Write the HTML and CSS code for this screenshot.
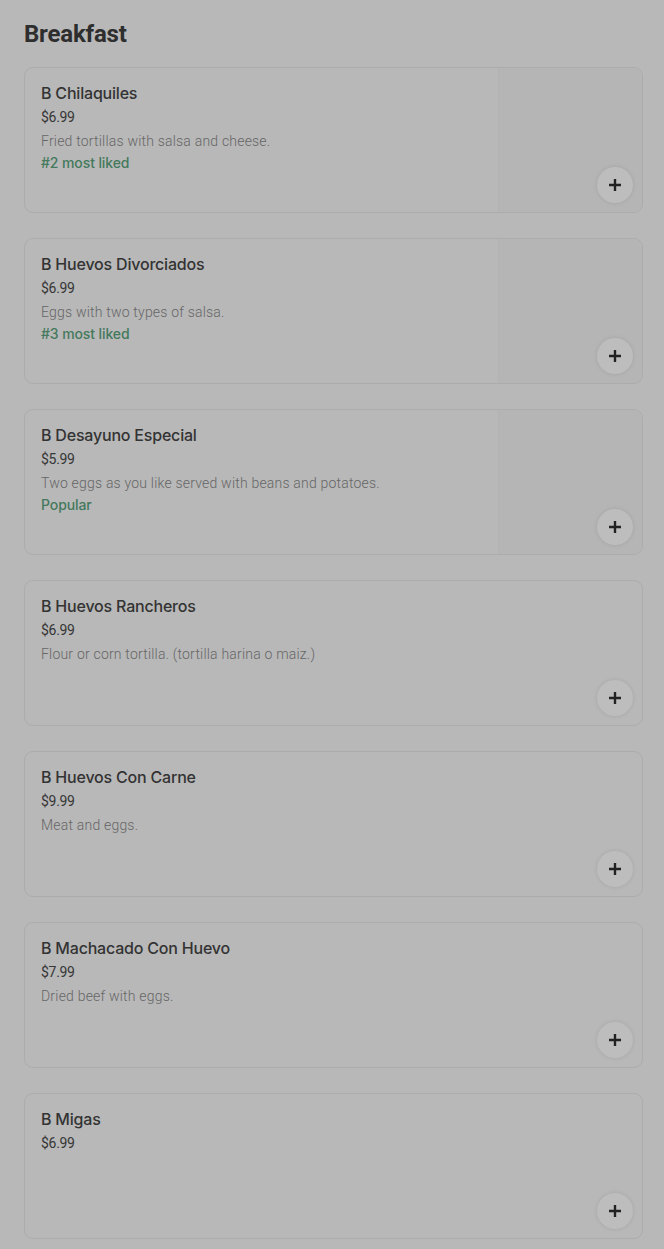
FILE: index.html
```html
<!DOCTYPE html>
<html lang="en">
<head>
  <meta charset="utf-8">
  <meta name="viewport" content="width=device-width, initial-scale=1">
  <title>Breakfast</title>
<link rel="stylesheet" href="styles.css">
</head>
<body>
  <main class="menu">
    <h2 class="section-title">Breakfast</h2>
    <ul class="items">
      <li class="item">
        <div class="info">
          <span class="name">B Chilaquiles</span>
          <span class="price">$6.99</span>
          <span class="desc">Fried tortillas with salsa and cheese.</span>
          <span class="tag">#2 most liked</span>
        </div>
        <div class="photo"></div>
        <button class="add" aria-label="Add"><svg viewBox="0 0 12 12" width="12" height="12"><path d="M6 0v12M0 6h12" stroke="#222" stroke-width="2.4"/></svg></button>
      </li>
      <li class="item">
        <div class="info">
          <span class="name">B Huevos Divorciados</span>
          <span class="price">$6.99</span>
          <span class="desc">Eggs with two types of salsa.</span>
          <span class="tag">#3 most liked</span>
        </div>
        <div class="photo"></div>
        <button class="add" aria-label="Add"><svg viewBox="0 0 12 12" width="12" height="12"><path d="M6 0v12M0 6h12" stroke="#222" stroke-width="2.4"/></svg></button>
      </li>
      <li class="item">
        <div class="info">
          <span class="name">B Desayuno Especial</span>
          <span class="price">$5.99</span>
          <span class="desc">Two eggs as you like served with beans and potatoes.</span>
          <span class="tag">Popular</span>
        </div>
        <div class="photo"></div>
        <button class="add" aria-label="Add"><svg viewBox="0 0 12 12" width="12" height="12"><path d="M6 0v12M0 6h12" stroke="#222" stroke-width="2.4"/></svg></button>
      </li>
      <li class="item">
        <div class="info">
          <span class="name">B Huevos Rancheros</span>
          <span class="price">$6.99</span>
          <span class="desc">Flour or corn tortilla. (tortilla harina o maiz.)</span>
        </div>
        <button class="add" aria-label="Add"><svg viewBox="0 0 12 12" width="12" height="12"><path d="M6 0v12M0 6h12" stroke="#222" stroke-width="2.4"/></svg></button>
      </li>
      <li class="item">
        <div class="info">
          <span class="name">B Huevos Con Carne</span>
          <span class="price">$9.99</span>
          <span class="desc">Meat and eggs.</span>
        </div>
        <button class="add" aria-label="Add"><svg viewBox="0 0 12 12" width="12" height="12"><path d="M6 0v12M0 6h12" stroke="#222" stroke-width="2.4"/></svg></button>
      </li>
      <li class="item">
        <div class="info">
          <span class="name">B Machacado Con Huevo</span>
          <span class="price">$7.99</span>
          <span class="desc">Dried beef with eggs.</span>
        </div>
        <button class="add" aria-label="Add"><svg viewBox="0 0 12 12" width="12" height="12"><path d="M6 0v12M0 6h12" stroke="#222" stroke-width="2.4"/></svg></button>
      </li>
      <li class="item">
        <div class="info">
          <span class="name">B Migas</span>
          <span class="price">$6.99</span>
        </div>
        <button class="add" aria-label="Add"><svg viewBox="0 0 12 12" width="12" height="12"><path d="M6 0v12M0 6h12" stroke="#222" stroke-width="2.4"/></svg></button>
      </li>
    </ul>
  </main>
</body>
</html>
```

FILE: styles.css
```css
html, body {
  background: #b8b8b8;
}
body {
  margin: 0;
  font-family: Roboto, "Liberation Sans", sans-serif;
  color: #2f2f2f;
}
.menu {
  padding: 17px 21px 0 24px;
}
.section-title {
  margin: 0 0 16px;
  font-size: 24px;
  font-weight: 700;
  letter-spacing: -0.2px;
  line-height: 34px;
  color: #2e2e2e;
}
.items {
  list-style: none;
  margin: 0;
  padding: 0;
  display: flex;
  flex-direction: column;
  gap: 25px;
}
.item {
  position: relative;
  display: flex;
  height: 144px;
  border: 1px solid #acacac;
  border-radius: 9px;
  overflow: hidden;
}
.info {
  flex: 1;
  display: flex;
  flex-direction: column;
  padding: 14px 16px;
}
.name {
  font-family: Inter, Roboto, sans-serif;
  font-size: 16px;
  font-weight: 500;
  letter-spacing: -0.2px;
  line-height: 22px;
  color: #333;
  margin-bottom: 3px;
}
.price {
  font-size: 14px;
  line-height: 20px;
  letter-spacing: -0.3px;
  color: #363636;
  margin-bottom: 4px;
}
.desc {
  font-size: 14px;
  font-weight: 300;
  letter-spacing: 0.2px;
  line-height: 20px;
  color: #666;
  margin-bottom: 2px;
}
.tag {
  font-family: Inter, Roboto, sans-serif;
  font-size: 14px;
  font-weight: 500;
  letter-spacing: -0.1px;
  line-height: 20px;
  color: #44795d;
}
.photo {
  width: 143px;
  background: #b5b5b5;
  border-left: 1px solid #b2b2b2;
}
.add {
  position: absolute;
  right: 9px;
  bottom: 9px;
  width: 36px;
  height: 36px;
  border: none;
  border-radius: 50%;
  background: #bdbdbd;
  box-shadow: 0 0 4px rgba(0, 0, 0, 0.1);
  padding: 0;
  display: flex;
  align-items: center;
  justify-content: center;
}
```
